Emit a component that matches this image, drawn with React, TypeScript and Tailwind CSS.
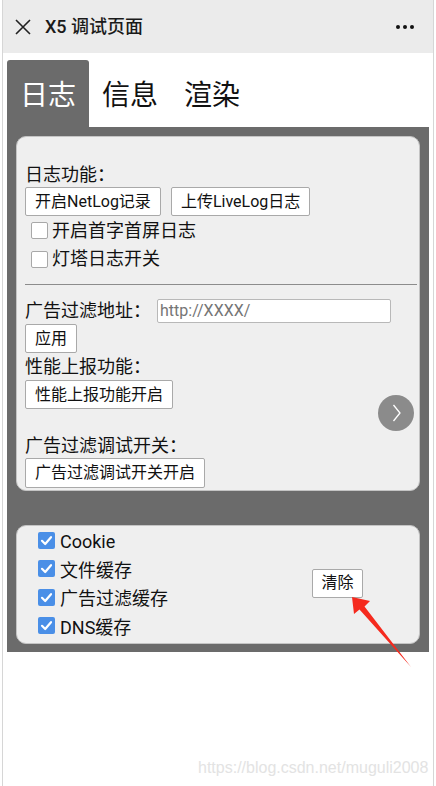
import React from "react";

const Btn = ({ children, className = "px-[9px]" }: { children: React.ReactNode; className?: string }) => (
  <div
    className={
      "inline-flex h-[29px] items-center justify-center whitespace-nowrap rounded-[2px] border border-[#a9a9a9] bg-white text-[16px] leading-none text-[#111] " +
      className
    }
  >
    {children}
  </div>
);

const EmptyBox = () => (
  <div className="h-[17px] w-[17px] shrink-0 rounded-[2px] border border-[#a8a8a8] bg-white" />
);

const CheckedBox = () => (
  <div className="flex h-[17px] w-[17px] shrink-0 items-center justify-center rounded-[2px] bg-[#4a8fe7]">
    <svg width="17" height="17" viewBox="0 0 17 17">
      <path d="M4 8.8 L7.2 12 L13 5.2" fill="none" stroke="white" strokeWidth="2.2" strokeLinecap="round" strokeLinejoin="round" />
    </svg>
  </div>
);

export default function App() {
  return (
    <div className="relative h-[786px] w-[436px] overflow-hidden bg-white font-['Roboto','Noto_Sans_CJK_SC',sans-serif] text-[#111]">
      <div className="ml-[2px] flex h-[786px] w-[432px] flex-col border-x border-[#d6d6d6]">
        {/* Header */}
        <div className="flex h-[53px] shrink-0 items-center bg-[#ebebeb]">
          <svg className="ml-[12px]" width="16" height="16" viewBox="0 0 16 16">
            <path d="M1 1 L15 15 M15 1 L1 15" stroke="#222" strokeWidth="1.6" />
          </svg>
          <span className="ml-[14px] text-[18px] font-medium leading-none text-[#1a1a1a]">X5 调试页面</span>
          <div className="ml-auto mr-[19px] flex gap-[3px]">
            <div className="h-[4px] w-[4px] rounded-full bg-[#111]" />
            <div className="h-[4px] w-[4px] rounded-full bg-[#111]" />
            <div className="h-[4px] w-[4px] rounded-full bg-[#111]" />
          </div>
        </div>

        {/* Tabs */}
        <div className="mt-[7px] flex h-[67px] shrink-0 items-stretch">
          <div className="ml-[4px] flex w-[82px] items-center justify-center rounded-t-[3px] bg-[#6b6b6b] pt-[5px] text-[28px] leading-none text-white">
            日志
          </div>
          <div className="flex items-center px-[13px] pt-[5px] text-[28px] leading-none text-[#111]">信息</div>
          <div className="flex items-center px-[13px] pt-[5px] text-[28px] leading-none text-[#111]">渲染</div>
        </div>

        {/* Panel */}
        <div className="mx-[4px] flex flex-col bg-[#6b6b6b] px-[9px] pb-[8px] pt-[9px]">
          {/* Card 1 */}
          <div className="relative flex flex-col rounded-[10px] border border-[#c4c4c4] bg-[#efefef] pb-[2px] pl-[8px] pt-[26px]">
            <div className="flex h-[24px] items-center text-[18px] leading-none">日志功能：</div>
            <div className="flex gap-[10px]">
              <Btn>开启NetLog记录</Btn>
              <Btn>上传LiveLog日志</Btn>
            </div>
            <div className="flex h-[29px] items-center gap-[4px] pl-[6px] text-[18px] leading-none">
              <EmptyBox />
              <span>开启首字首屏日志</span>
            </div>
            <div className="flex h-[28px] items-center gap-[4px] pl-[6px] text-[18px] leading-none">
              <EmptyBox />
              <span>灯塔日志开关</span>
            </div>
            <div className="mr-[2px] mt-[11px] h-px bg-[#8c8c8c]" />
            <div className="mt-[14px] flex h-[25px] items-start">
              <span className="flex h-[24px] items-center text-[18px] leading-none">广告过滤地址：</span>
              <div className="ml-[6px] flex h-[24px] w-[234px] items-center rounded-[2px] border border-[#b8b8b8] bg-white pl-[2px] text-[16px] leading-none text-[#757575]">
                http://XXXX/
              </div>
            </div>
            <div>
              <Btn>应用</Btn>
            </div>
            <div className="flex h-[27px] items-center text-[18px] leading-none">性能上报功能：</div>
            <div>
              <Btn>性能上报功能开启</Btn>
            </div>
            <div className="h-[24px]" />
            <div className="flex h-[25px] items-center text-[18px] leading-none">广告过滤调试开关：</div>
            <div>
              <Btn className="h-[30px] px-[9px]">广告过滤调试开关开启</Btn>
            </div>

            <div className="absolute right-[5px] top-[258px] flex h-[36px] w-[36px] items-center justify-center rounded-full bg-[#8b8b8b]">
              <svg width="36" height="36" viewBox="0 0 36 36">
                <path d="M15.5 10 L22 18 L15.5 26" fill="none" stroke="white" strokeWidth="1.3" />
              </svg>
            </div>
          </div>

          {/* Card 2 */}
          <div className="mt-[34px] flex rounded-[10px] border border-[#c4c4c4] bg-[#efefef] pb-[3px] pl-[21px]">
            <div className="flex flex-col">
              {["Cookie", "文件缓存", "广告过滤缓存", "DNS缓存"].map((t) => (
                <div key={t} className="flex h-[28.5px] items-center gap-[5px] text-[18px] leading-none">
                  <CheckedBox />
                  <span className="pt-[4px]">{t}</span>
                </div>
              ))}
            </div>
            <div className="ml-auto mr-[56px] self-center">
              <Btn className="w-[51px]">清除</Btn>
            </div>
          </div>
        </div>
      </div>

      {/* Red annotation arrow */}
      <svg className="absolute left-0 top-0" width="436" height="786" viewBox="0 0 436 786">
        <polygon
          points="352,597 370,601 364.5,606.5 411,667 359.5,609.5 354,614"
          fill="#f52a1e"
        />
      </svg>

      {/* Watermark */}
      <div className="absolute left-[198px] top-[758px] whitespace-nowrap font-['Liberation_Sans',sans-serif] text-[16px] leading-[20px] text-[#e3e3e3]">
        https://blog.csdn.net/muguli2008
      </div>
    </div>
  );
}
